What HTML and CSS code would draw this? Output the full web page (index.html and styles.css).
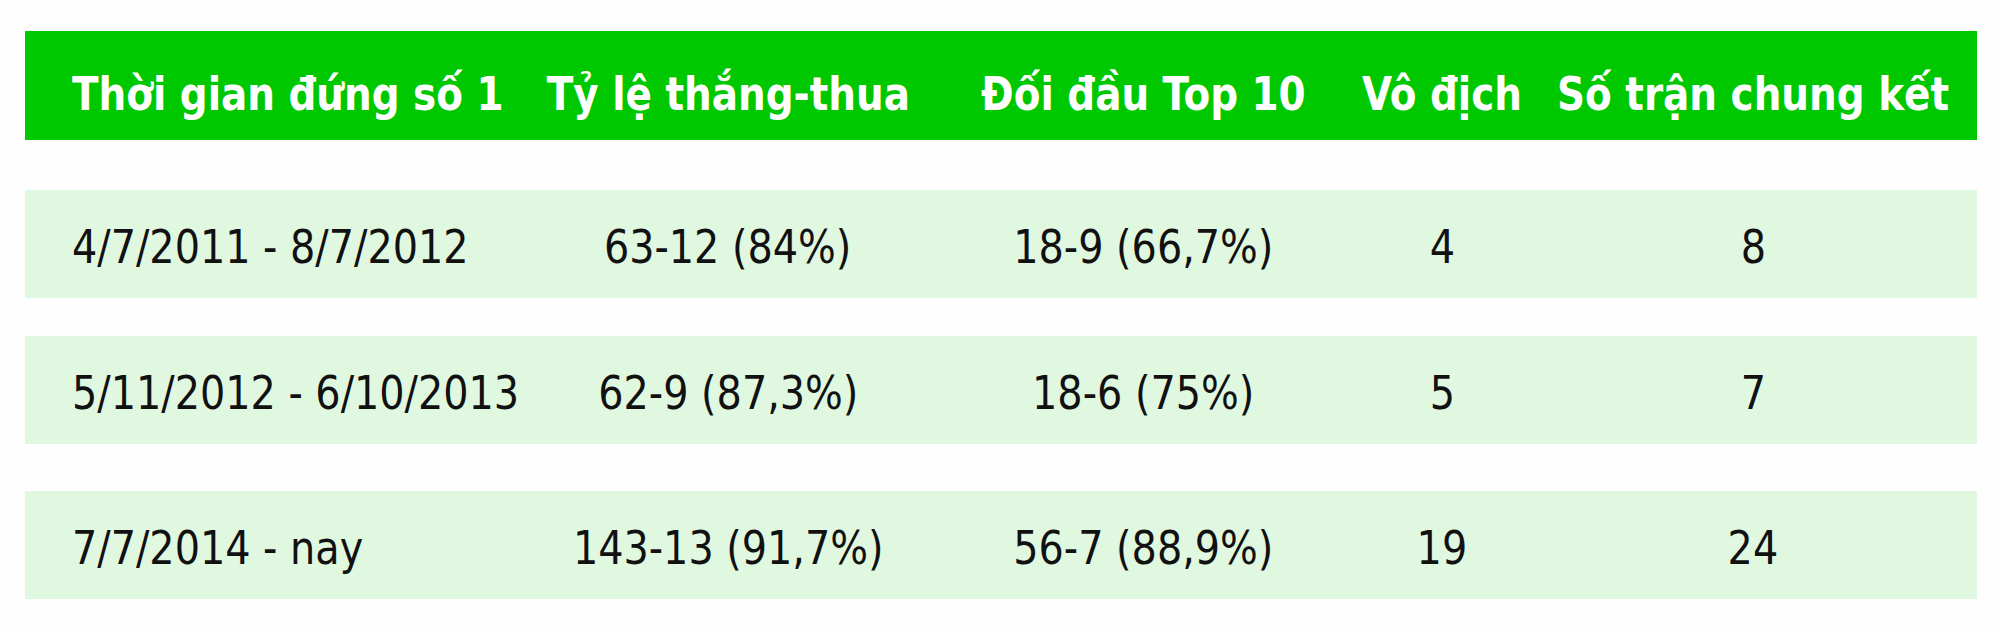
FILE: index.html
```html
<!DOCTYPE html>
<html lang="vi">
<head>
<meta charset="utf-8">
<link rel="stylesheet" href="styles.css">
</head>
<body>
<div class="table">
  <div class="row head">
    <div class="cell first"><span class="t">Thời gian đứng số 1</span></div>
    <div class="cell"><span class="t">Tỷ lệ thắng-thua</span></div>
    <div class="cell"><span class="t">Đối đầu Top 10</span></div>
    <div class="cell"><span class="t">Vô địch</span></div>
    <div class="cell"><span class="t">Số trận chung kết</span></div>
  </div>
  <div class="row body r1">
    <div class="cell first"><span class="t">4/7/2011 - 8/7/2012</span></div>
    <div class="cell"><span class="t">63-12 (84%)</span></div>
    <div class="cell"><span class="t">18-9 (66,7%)</span></div>
    <div class="cell"><span class="t">4</span></div>
    <div class="cell"><span class="t">8</span></div>
  </div>
  <div class="row body r2">
    <div class="cell first"><span class="t">5/11/2012 - 6/10/2013</span></div>
    <div class="cell"><span class="t">62-9 (87,3%)</span></div>
    <div class="cell"><span class="t">18-6 (75%)</span></div>
    <div class="cell"><span class="t">5</span></div>
    <div class="cell"><span class="t">7</span></div>
  </div>
  <div class="row body r3">
    <div class="cell first"><span class="t">7/7/2014 - nay</span></div>
    <div class="cell"><span class="t">143-13 (91,7%)</span></div>
    <div class="cell"><span class="t">56-7 (88,9%)</span></div>
    <div class="cell"><span class="t">19</span></div>
    <div class="cell"><span class="t">24</span></div>
  </div>
</div>
</body>
</html>
```
FILE: styles.css
```css
html, body {
  margin: 0;
  padding: 0;
  background: #fefefe;
}
.table {
  width: 1952px;
  padding: 31px 0 0 25px;
  font-family: "DejaVu Sans Condensed", "DejaVu Sans", sans-serif;
  font-stretch: condensed;
}
.row {
  display: grid;
  grid-template-columns: 500px 406px 424px 174px 448px;
  align-items: center;
}
.head {
  height: 109px;
  background: #00c800;
  color: #ffffff;
  font-weight: bold;
  font-size: 47px;
}
.head .cell { padding-top: 16px; }
.body {
  height: 108px;
  background: #e0f8e0;
  color: #111111;
  font-size: 47px;
}
.body .cell { padding-top: 5px; }
.r1 { margin-top: 50px; }
.r2 { margin-top: 38px; }
.r3 { margin-top: 47px; }
.cell {
  text-align: center;
  white-space: nowrap;
  line-height: 1;
}
.cell .t {
  display: inline-block;
  transform-origin: center center;
}
.head .t { transform: scaleX(0.92); }
.body .t { transform: scaleX(0.94); }
.cell.first {
  text-align: left;
  padding-left: 47px;
}
.cell.first .t { transform-origin: left center; }
```
